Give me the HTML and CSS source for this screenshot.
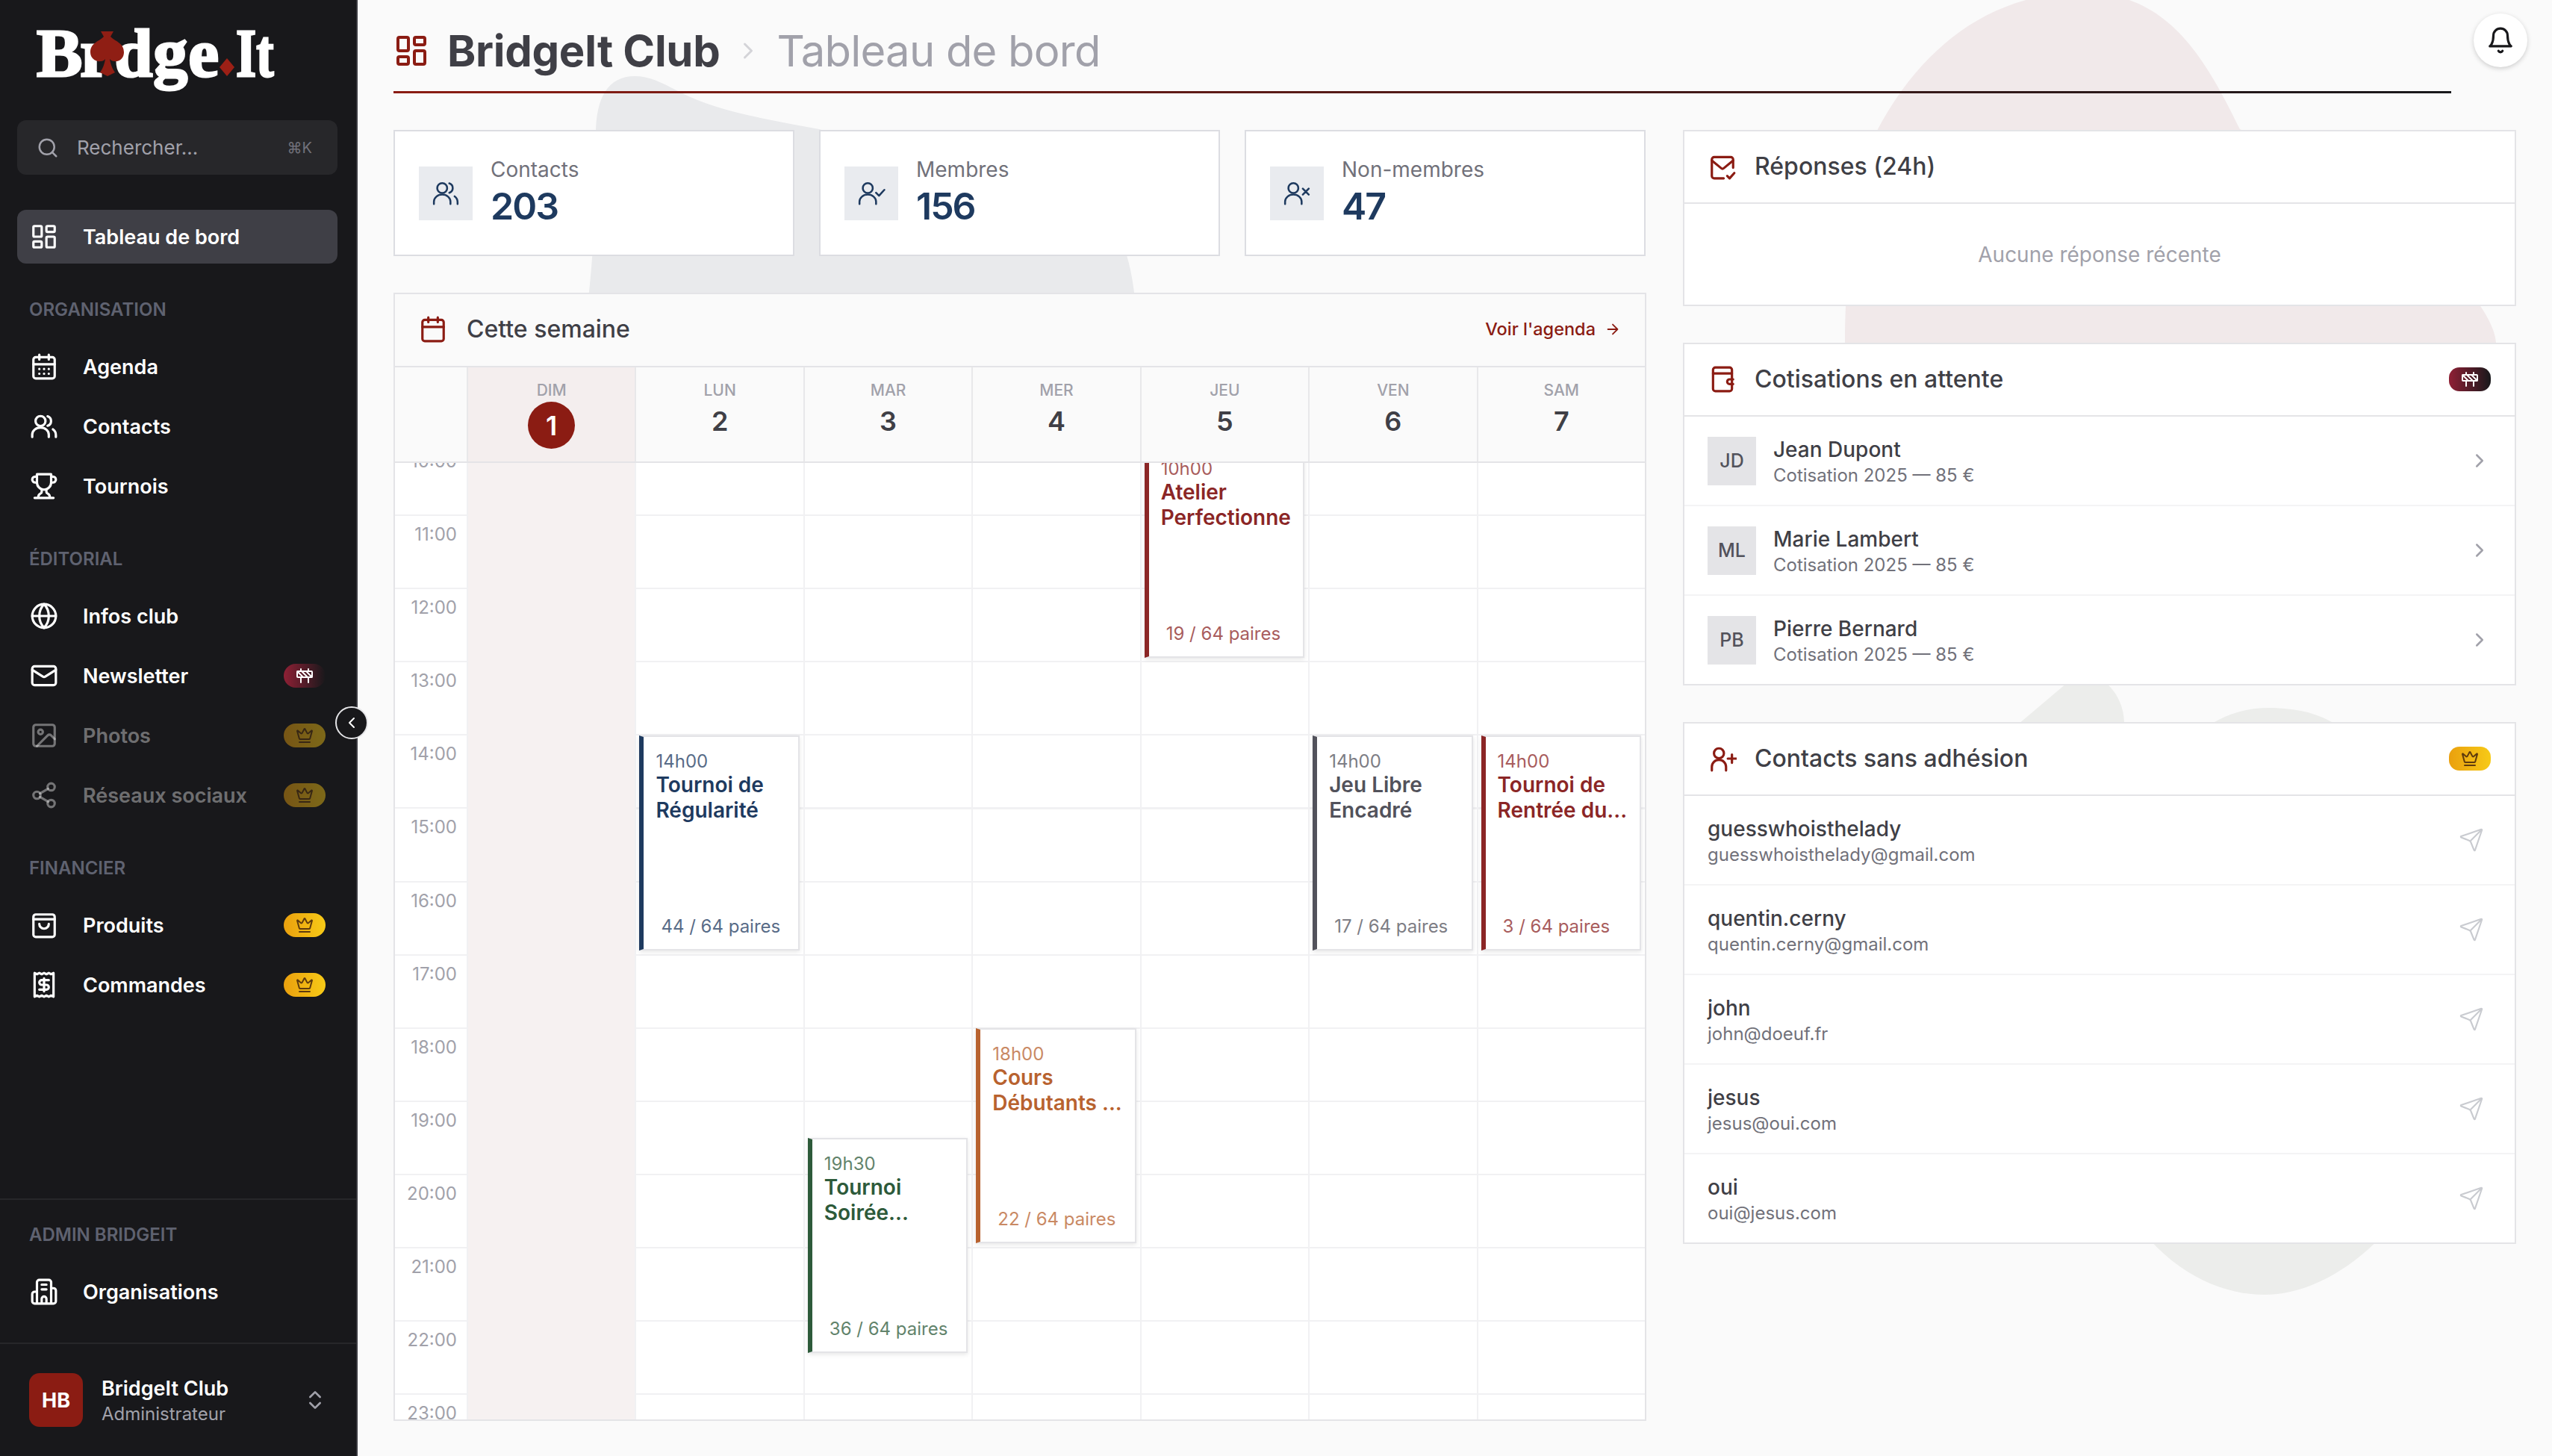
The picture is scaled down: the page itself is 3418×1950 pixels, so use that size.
FILE: index.html
```html
<!DOCTYPE html>
<html lang="fr">

<head>
  <meta charset="utf-8">
  <title>BridgeIt Club - Tableau de bord</title>
  <link rel="stylesheet" href="styles.css">
</head>

<body>
  <svg class="sprite" xmlns="http://www.w3.org/2000/svg">
    <symbol id="i-dashboard" viewBox="0 0 24 24"><rect x="3" y="3" width="7" height="9" rx="1"/><rect x="14" y="3" width="7" height="5" rx="1"/><rect x="14" y="12" width="7" height="9" rx="1"/><rect x="3" y="16" width="7" height="5" rx="1"/></symbol>
    <symbol id="i-search" viewBox="0 0 24 24"><circle cx="11" cy="11" r="8"/><path d="m21 21-4.3-4.3"/></symbol>
    <symbol id="i-agenda" viewBox="0 0 24 24"><path d="M8 2v4M16 2v4M3 10h18"/><rect x="3" y="4" width="18" height="18" rx="2"/><path d="M8 14h.01M12 14h.01M16 14h.01M8 18h.01M12 18h.01M16 18h.01"/></symbol>
    <symbol id="i-calendar" viewBox="0 0 24 24"><path d="M8 2v4M16 2v4M3 10h18"/><rect x="3" y="4" width="18" height="18" rx="2"/></symbol>
    <symbol id="i-users" viewBox="0 0 24 24"><circle cx="9" cy="7.5" r="4.2"/><path d="M2 21v-2a7 6 0 0 1 14 0v2M15 3.500a4.200 4.200 0 0 1 0 8M19.500 14.500a6 6 0 0 1 2.500 5V21"/></symbol>
    <symbol id="i-user-check" viewBox="0 0 24 24"><circle cx="9" cy="7.5" r="4.2"/><path d="M2 21v-2a7 6 0 0 1 14 0v2M16 11.500l2.500 2.500 4.500-5"/></symbol>
    <symbol id="i-user-x" viewBox="0 0 24 24"><circle cx="9" cy="7.5" r="4.2"/><path d="M2 21v-2a7 6 0 0 1 14 0v2M17 8l5 5M22 8l-5 5"/></symbol>
    <symbol id="i-user-plus" viewBox="0 0 24 24"><circle cx="9" cy="7.5" r="4.2"/><path d="M3 22v-3a6 6 0 0 1 12 0v3M20 8.500v7M16.500 12h7"/></symbol>
    <symbol id="i-trophy" viewBox="0 0 24 24"><path d="M6 9H4.500a2.500 2.500 0 0 1 0-5H6M18 9h1.500a2.500 2.500 0 0 0 0-5H18M4 22h16M10 14.660V17c0 .55-.47.98-.97 1.210C7.850 18.750 7 20.240 7 22M14 14.660V17c0 .55.47.98.97 1.210C16.150 18.750 17 20.240 17 22M18 2H6v7a6 6 0 0 0 12 0V2Z"/></symbol>
    <symbol id="i-globe" viewBox="0 0 24 24"><circle cx="12" cy="12" r="10"/><path d="M12 2a14.500 14.500 0 0 0 0 20 14.500 14.500 0 0 0 0-20M2 12h20"/></symbol>
    <symbol id="i-mail" viewBox="0 0 24 24"><rect x="2" y="4" width="20" height="16" rx="2"/><path d="m22 7-8.970 5.700a1.940 1.940 0 0 1-2.060 0L2 7"/></symbol>
    <symbol id="i-mail-check" viewBox="0 0 24 24"><path d="M21 13V6a2 2 0 0 0-2-2H5a2 2 0 0 0-2 2v14a2 2 0 0 0 2 2h8"/><path d="m21 7-8 6.500a1.600 1.600 0 0 1-2 0L3 7M16 20l2 2 4-4.500"/></symbol>
    <symbol id="i-image" viewBox="0 0 24 24"><rect x="3" y="3" width="18" height="18" rx="2"/><circle cx="9" cy="9" r="2"/><path d="m21 15-3.086-3.086a2 2 0 0 0-2.828 0L6 21"/></symbol>
    <symbol id="i-share" viewBox="0 0 24 24"><circle cx="18" cy="5" r="3"/><circle cx="6" cy="12" r="3"/><circle cx="18" cy="19" r="3"/><path d="m8.590 13.510 6.830 3.980M15.410 6.510l-6.820 3.980"/></symbol>
    <symbol id="i-bag" viewBox="0 0 24 24"><rect x="3" y="3" width="18" height="19" rx="2"/><path d="M3 7h18M16 11a4 4 0 0 1-8 0"/></symbol>
    <symbol id="i-receipt" viewBox="0 0 24 24"><path d="M4 2v20l2-1 2 1 2-1 2 1 2-1 2 1 2-1 2 1V2l-2 1-2-1-2 1-2-1-2 1-2-1-2 1Z"/><path d="M16 8h-6a2 2 0 1 0 0 4h4a2 2 0 1 1 0 4H8M12 17.500v-11"/></symbol>
    <symbol id="i-building" viewBox="0 0 24 24"><path d="M6 22V4a2 2 0 0 1 2-2h8a2 2 0 0 1 2 2v18ZM6 12H4a2 2 0 0 0-2 2v6a2 2 0 0 0 2 2h2M18 9h2a2 2 0 0 1 2 2v9a2 2 0 0 1-2 2h-2M10 6h4M10 10h4M10 22v-4a2 2 0 0 1 4 0v4"/></symbol>
    <symbol id="i-updown" viewBox="0 0 24 24"><path d="m7 15 5 5 5-5M7 9l5-5 5 5"/></symbol>
    <symbol id="i-barrier" viewBox="0 0 24 24"><rect x="2" y="6" width="20" height="8" rx="1"/><path d="M17 14v7M7 14v7M17 3v3M7 3v3M10 14 2.300 6.300M14 6l7.700 7.700M8 6l8 8"/></symbol>
    <symbol id="i-crown" viewBox="0 0 24 24"><path d="M11.562 3.266a.5.5 0 0 1 .876 0L15.390 8.870a1 1 0 0 0 1.516.294L21.183 5.500a.5.5 0 0 1 .798.519l-2.834 10.246a1 1 0 0 1-.956.734H5.810a1 1 0 0 1-.957-.734L2.020 6.020a.5.5 0 0 1 .798-.519l4.276 3.664a1 1 0 0 0 1.516-.294zM5 21h14"/></symbol>
    <symbol id="i-bell" viewBox="0 0 24 24"><path d="M6 8a6 6 0 0 1 12 0c0 7 3 9 3 9H3s3-2 3-9M10.300 21a1.940 1.940 0 0 0 3.400 0"/></symbol>
    <symbol id="i-wallet" viewBox="0 0 24 24"><rect x="4" y="2" width="16" height="20" rx="2"/><path d="M4 7h16M21 12h-3a2 2 0 0 0 0 4h3"/></symbol>
    <symbol id="i-send" viewBox="0 0 24 24"><path d="M14.536 21.686a.5.5 0 0 0 .937-.024l6.500-19a.496.496 0 0 0-.635-.635l-19 6.500a.5.5 0 0 0-.024.937l7.930 3.180a2 2 0 0 1 1.112 1.110zM21.854 2.147 10.914 13.086"/></symbol>
    <symbol id="i-arrow" viewBox="0 0 24 24"><path d="M5 12h14M12 5l7 7-7 7"/></symbol>
    <symbol id="i-next" viewBox="0 0 24 24"><path d="m9 18 6-6-6-6"/></symbol>
    <symbol id="i-prev" viewBox="0 0 24 24"><path d="m15 18-6-6 6-6"/></symbol>
  </svg>

  <div class="app">
    <aside class="sidebar">
      <div class="logo">
        <span class="logo-br">Br</span>
        <svg class="logo-spade" viewBox="0 0 45 60"><path d="M14 0h17l-4 7c5 6 18 8 18 21 0 8-6 13-13 12-3 0-5-2-6-3 1 7 4 14 7 18l-10 5-10-5c3-4 6-11 7-18-1 1-3 3-6 3C7 41 0 36 0 28 0 15 13 13 18 7Z"/></svg>
        <span class="logo-dge">dge</span>
        <svg class="logo-diamond" viewBox="0 0 20 24"><path d="M10 0l10 12-10 12L0 12Z"/></svg>
        <span class="logo-it">It</span>
      </div>

      <div class="search">
        <svg class="icon search-icon"><use href="#i-search"/></svg>
        <span class="search-text">Rechercher...</span>
        <span class="search-key">⌘K</span>
      </div>

      <nav class="nav">
        <a class="nav-item active"><svg class="icon"><use href="#i-dashboard"/></svg>Tableau de bord</a>

        <h4 class="nav-title">Organisation</h4>
        <a class="nav-item"><svg class="icon"><use href="#i-agenda"/></svg>Agenda</a>
        <a class="nav-item"><svg class="icon"><use href="#i-users"/></svg>Contacts</a>
        <a class="nav-item"><svg class="icon"><use href="#i-trophy"/></svg>Tournois</a>

        <h4 class="nav-title">Éditorial</h4>
        <a class="nav-item"><svg class="icon"><use href="#i-globe"/></svg>Infos club</a>
        <a class="nav-item"><svg class="icon"><use href="#i-mail"/></svg>Newsletter
          <span class="pill pill-wip"><svg class="icon"><use href="#i-barrier"/></svg></span></a>
        <a class="nav-item disabled"><svg class="icon"><use href="#i-image"/></svg>Photos
          <span class="pill pill-pro"><svg class="icon"><use href="#i-crown"/></svg></span></a>
        <a class="nav-item disabled"><svg class="icon"><use href="#i-share"/></svg>Réseaux sociaux
          <span class="pill pill-pro"><svg class="icon"><use href="#i-crown"/></svg></span></a>

        <h4 class="nav-title">Financier</h4>
        <a class="nav-item"><svg class="icon"><use href="#i-bag"/></svg>Produits
          <span class="pill pill-pro"><svg class="icon"><use href="#i-crown"/></svg></span></a>
        <a class="nav-item"><svg class="icon"><use href="#i-receipt"/></svg>Commandes
          <span class="pill pill-pro"><svg class="icon"><use href="#i-crown"/></svg></span></a>
      </nav>

      <div class="admin">
        <h4 class="nav-title">Admin BridgeIt</h4>
        <a class="nav-item"><svg class="icon"><use href="#i-building"/></svg>Organisations</a>
      </div>

      <div class="account">
        <div class="account-avatar">HB</div>
        <div class="account-text">
          <strong>BridgeIt Club</strong>
          <span>Administrateur</span>
        </div>
        <svg class="icon account-switch"><use href="#i-updown"/></svg>
      </div>

      <button class="collapse"><svg class="icon"><use href="#i-prev"/></svg></button>
    </aside>

    <main class="main">
      <svg class="shapes" viewBox="479 0 2939 1950">
        <path class="shape-gray" d="M850 102C815 102 798 130 798 180C798 260 796 330 788 400L1520 400C1510 300 1470 250 1380 228C1280 210 1180 195 1097 173C1030 160 960 150 908 122C885 110 870 102 850 102Z"/>
        <path class="shape-pink" d="M2790-10C2660-10 2570 70 2515 173C2490 250 2471 340 2471 460V600H3343V459C3340 400 3200 260 3000 173C2950 70 2900-10 2790-10Z"/>
        <path class="shape-pale" d="M2703 970 2768 915H2821C2838 930 2845 950 2845 970Z"/>
        <path class="shape-pale" d="M2961 970C2985 955 3010 948 3040 948C3075 948 3105 955 3128 970Z"/>
        <path class="shape-pale" d="M2870 1650C2920 1710 2980 1734 3033 1734C3090 1734 3150 1700 3195 1650Z"/>
      </svg>

      <header class="topbar">
        <svg class="icon topbar-icon"><use href="#i-dashboard"/></svg>
        <h1>BridgeIt Club</h1>
        <svg class="icon topbar-sep"><use href="#i-next"/></svg>
        <h2>Tableau de bord</h2>
      </header>
      <button class="bell"><svg class="icon"><use href="#i-bell"/></svg></button>

      <div class="columns">
        <div class="col-left">
          <section class="stats">
            <div class="stat">
              <div class="stat-icon"><svg class="icon"><use href="#i-users"/></svg></div>
              <div><div class="stat-label">Contacts</div><div class="stat-value">203</div></div>
            </div>
            <div class="stat">
              <div class="stat-icon"><svg class="icon"><use href="#i-user-check"/></svg></div>
              <div><div class="stat-label">Membres</div><div class="stat-value">156</div></div>
            </div>
            <div class="stat">
              <div class="stat-icon"><svg class="icon"><use href="#i-user-x"/></svg></div>
              <div><div class="stat-label">Non-membres</div><div class="stat-value">47</div></div>
            </div>
          </section>

          <section class="week">
            <div class="card-head week-top">
              <svg class="icon"><use href="#i-calendar"/></svg>
              <h3>Cette semaine</h3>
              <a class="week-link">Voir l'agenda <svg class="icon"><use href="#i-arrow"/></svg></a>
            </div>

            <div class="week-days">
              <div class="day-head"></div>
              <div class="day-head today"><span>DIM</span><b class="today-num">1</b></div>
              <div class="day-head"><span>LUN</span><b>2</b></div>
              <div class="day-head"><span>MAR</span><b>3</b></div>
              <div class="day-head"><span>MER</span><b>4</b></div>
              <div class="day-head"><span>JEU</span><b>5</b></div>
              <div class="day-head"><span>VEN</span><b>6</b></div>
              <div class="day-head"><span>SAM</span><b>7</b></div>
            </div>

            <div class="week-body">
              <div class="week-grid">
                <div class="hours">
                  <div>10:00</div><div>11:00</div><div>12:00</div><div>13:00</div><div>14:00</div>
                  <div>15:00</div><div>16:00</div><div>17:00</div><div>18:00</div><div>19:00</div>
                  <div>20:00</div><div>21:00</div><div>22:00</div><div>23:00</div>
                </div>
                <div class="day today-col"></div>
                <div class="day">
                  <div class="event ev-navy at-14">
                    <span class="ev-time">14h00</span>
                    <strong>Tournoi de Régularité</strong>
                    <span class="ev-count">44 / 64 paires</span>
                  </div>
                </div>
                <div class="day">
                  <div class="event ev-green at-1930">
                    <span class="ev-time">19h30</span>
                    <strong>Tournoi Soirée...</strong>
                    <span class="ev-count">36 / 64 paires</span>
                  </div>
                </div>
                <div class="day">
                  <div class="event ev-orange at-18">
                    <span class="ev-time">18h00</span>
                    <strong>Cours Débutants&nbsp;...</strong>
                    <span class="ev-count">22 / 64 paires</span>
                  </div>
                </div>
                <div class="day">
                  <div class="event ev-red at-10">
                    <span class="ev-time">10h00</span>
                    <strong>Atelier Perfectionne</strong>
                    <span class="ev-count">19 / 64 paires</span>
                  </div>
                </div>
                <div class="day">
                  <div class="event ev-gray at-14">
                    <span class="ev-time">14h00</span>
                    <strong>Jeu Libre Encadré</strong>
                    <span class="ev-count">17 / 64 paires</span>
                  </div>
                </div>
                <div class="day">
                  <div class="event ev-red at-14">
                    <span class="ev-time">14h00</span>
                    <strong>Tournoi de Rentrée du...</strong>
                    <span class="ev-count">3 / 64 paires</span>
                  </div>
                </div>
              </div>
            </div>
          </section>
        </div>

        <div class="col-right">
          <section class="panel">
            <div class="card-head">
              <svg class="icon"><use href="#i-mail-check"/></svg>
              <h3>Réponses (24h)</h3>
            </div>
            <p class="empty">Aucune réponse récente</p>
          </section>

          <section class="panel">
            <div class="card-head">
              <svg class="icon"><use href="#i-wallet"/></svg>
              <h3>Cotisations en attente</h3>
              <span class="tag pill-wip"><svg class="icon"><use href="#i-barrier"/></svg></span>
            </div>
            <div class="row">
              <div class="row-avatar">JD</div>
              <div class="row-text"><b>Jean Dupont</b><span>Cotisation 2025 — 85 €</span></div>
              <svg class="icon row-next"><use href="#i-next"/></svg>
            </div>
            <div class="row">
              <div class="row-avatar">ML</div>
              <div class="row-text"><b>Marie Lambert</b><span>Cotisation 2025 — 85 €</span></div>
              <svg class="icon row-next"><use href="#i-next"/></svg>
            </div>
            <div class="row">
              <div class="row-avatar">PB</div>
              <div class="row-text"><b>Pierre Bernard</b><span>Cotisation 2025 — 85 €</span></div>
              <svg class="icon row-next"><use href="#i-next"/></svg>
            </div>
          </section>

          <section class="panel">
            <div class="card-head">
              <svg class="icon"><use href="#i-user-plus"/></svg>
              <h3>Contacts sans adhésion</h3>
              <span class="tag pill-pro"><svg class="icon"><use href="#i-crown"/></svg></span>
            </div>
            <div class="row">
              <div class="row-text"><b>guesswhoisthelady</b><span>guesswhoisthelady@gmail.com</span></div>
              <svg class="icon row-send"><use href="#i-send"/></svg>
            </div>
            <div class="row">
              <div class="row-text"><b>quentin.cerny</b><span>quentin.cerny@gmail.com</span></div>
              <svg class="icon row-send"><use href="#i-send"/></svg>
            </div>
            <div class="row">
              <div class="row-text"><b>john</b><span>john@doeuf.fr</span></div>
              <svg class="icon row-send"><use href="#i-send"/></svg>
            </div>
            <div class="row">
              <div class="row-text"><b>jesus</b><span>jesus@oui.com</span></div>
              <svg class="icon row-send"><use href="#i-send"/></svg>
            </div>
            <div class="row">
              <div class="row-text"><b>oui</b><span>oui@jesus.com</span></div>
              <svg class="icon row-send"><use href="#i-send"/></svg>
            </div>
          </section>
        </div>
      </div>
    </main>
  </div>
</body>

</html>
```

FILE: styles.css
```css
* {
  box-sizing: border-box;
}

body {
  margin: 0;
  font-family: Inter, "Liberation Sans", sans-serif;
  background: #fafafa;
  color: #3f3f46;
}

h1,
h2,
h3,
h4,
p {
  margin: 0;
}

.sprite {
  display: none;
}

.icon {
  fill: none;
  stroke: currentColor;
  stroke-width: 2;
  stroke-linecap: round;
  stroke-linejoin: round;
  flex: none;
}

.app {
  display: flex;
  height: 1950px;
  overflow: hidden;
}

/* sidebar */

.sidebar {
  position: relative;
  z-index: 2;
  width: 479px;
  flex: none;
  display: flex;
  flex-direction: column;
  background: #18181b;
  border-right: 2px solid #3a3a40;
  color: #fff;
}

.logo {
  height: 161px;
  flex: none;
  padding: 25px 0 0 49px;
  display: flex;
  align-items: flex-start;
  font-family: "Liberation Serif", serif;
  font-weight: 700;
  font-size: 92px;
  -webkit-text-stroke: 3px #fff;
  line-height: 1;
}

.logo-br {
  letter-spacing: -3px;
}

.logo-spade {
  width: 45px;
  height: 60px;
  margin: 17px -13px 0 -24px;
  fill: #8f1e14;
  position: relative;
  flex: none;
}

.logo-dge {
  letter-spacing: 1px;
}

.logo-diamond {
  width: 20px;
  height: 24px;
  margin: 53px 2px 0 0;
  fill: #9c2016;
  flex: none;
}

.logo-it {
  transform: scaleX(0.76);
  transform-origin: left center;
}

.search {
  margin: 0 25px 0 23px;
  height: 73px;
  flex: none;
  border-radius: 12px;
  background: #27272a;
  display: flex;
  align-items: center;
  padding: 0 34px 0 26px;
  color: #a1a1aa;
  font-size: 26px;
}

.search-icon {
  width: 30px;
  height: 30px;
  margin-right: 24px;
}

.search-key {
  margin-left: auto;
  font-size: 20px;
  color: #71717a;
}

.nav {
  flex: 1;
  padding: 47px 25px 0 23px;
}

.nav-item {
  display: flex;
  align-items: center;
  height: 72px;
  margin-bottom: 8px;
  padding: 0 16px 0 17px;
  border-radius: 12px;
  font-size: 27px;
  font-weight: 600;
  color: #fff;
}

.nav-item .icon {
  width: 38px;
  height: 38px;
  margin-right: 33px;
}

.nav-item.active {
  background: #3f3f46;
}

.nav-item.disabled {
  color: rgba(255, 255, 255, 0.4);
}

.nav-item.disabled .pill {
  opacity: 0.45;
}

.nav-title {
  height: 24px;
  line-height: 24px;
  margin: 50px 0 28px 16px;
  font-size: 24px;
  font-weight: 600;
  text-transform: uppercase;
  color: #5f6270;
}

.pill {
  margin-left: auto;
  width: 56px;
  height: 32px;
  border-radius: 16px;
  display: flex;
  align-items: center;
  justify-content: center;
}

.pill .icon,
.tag .icon {
  width: 24px;
  height: 24px;
  margin: 0;
}

.pill-wip {
  background: linear-gradient(90deg, #8f2035, #18181b);
  color: #fff;
}

.pill-pro {
  background: linear-gradient(90deg, #eaa00e, #f7ca17);
  color: #5f3b0d;
}

.admin {
  height: 193px;
  flex: none;
  border-top: 2px solid #27272a;
  padding: 0 25px 0 23px;
}

.admin .nav-title {
  margin-top: 35px;
  margin-bottom: 28px;
}

.account {
  height: 152px;
  flex: none;
  border-top: 2px solid #27272a;
  padding: 0 39px;
  display: flex;
  align-items: center;
}

.account-avatar {
  width: 72px;
  height: 72px;
  border-radius: 14px;
  background: #8b1c13;
  display: flex;
  align-items: center;
  justify-content: center;
  font-size: 27px;
  font-weight: 700;
}

.account-text {
  margin-left: 25px;
  flex: 1;
  display: flex;
  flex-direction: column;
  padding-top: 3px;
}

.account-text strong {
  font-size: 27px;
  font-weight: 600;
  line-height: 34px;
}

.account-text span {
  font-size: 24px;
  line-height: 34px;
  color: #a1a1aa;
}

.account-switch {
  width: 32px;
  height: 32px;
  color: #a1a1aa;
}

.collapse {
  position: absolute;
  left: 449px;
  top: 946px;
  width: 44px;
  height: 44px;
  border-radius: 50%;
  border: 2px solid #e4e4e7;
  background: #18181b;
  color: #fff;
  padding: 0;
  display: flex;
  align-items: center;
  justify-content: center;
}

.collapse .icon {
  width: 24px;
  height: 24px;
}

/* main */

.main {
  position: relative;
  flex: 1;
  padding: 0 48px;
}

.shapes {
  position: absolute;
  left: 0;
  top: 0;
  width: 2939px;
  height: 1950px;
}

.shape-gray {
  fill: #e9eaec;
}

.shape-pink {
  fill: #f1e9ea;
}

.shape-pale {
  fill: #ecedeb;
}

.topbar {
  position: relative;
  width: 2756px;
  height: 125px;
  display: flex;
  align-items: center;
  padding-top: 14px;
  border-bottom: 3px solid;
  border-image: linear-gradient(90deg, #8b1c13, #18181b) 1;
}

.topbar-icon {
  width: 48px;
  height: 48px;
  color: #8b1c13;
  margin-right: 24px;
}

.topbar h1 {
  font-size: 58px;
  font-weight: 700;
  letter-spacing: -0.3px;
  color: #3f3f46;
}

.topbar-sep {
  width: 36px;
  height: 36px;
  margin: 0 20px;
  color: #d4d4d8;
}

.topbar h2 {
  font-size: 58px;
  font-weight: 400;
  letter-spacing: -0.8px;
  color: #a1a1aa;
}

.bell {
  position: absolute;
  top: 18px;
  right: 33px;
  width: 72px;
  height: 72px;
  border-radius: 50%;
  border: none;
  padding: 0;
  background: #fff;
  box-shadow: 0 2px 6px rgba(0, 0, 0, 0.18);
  color: #18181b;
  display: flex;
  align-items: center;
  justify-content: center;
}

.bell .icon {
  width: 38px;
  height: 38px;
}

.columns {
  position: relative;
  display: grid;
  grid-template-columns: 1678px 1116px;
  column-gap: 49px;
  margin-top: 49px;
}

.col-left,
.col-right {
  display: flex;
  flex-direction: column;
  gap: 49px;
}

.stats {
  display: grid;
  grid-template-columns: repeat(3, 537px);
  column-gap: 33px;
}

.stat {
  height: 169px;
  background: #fff;
  border: 2px solid #dcdde2;
  padding-left: 32px;
  display: flex;
  align-items: center;
  gap: 24px;
}

.stat-icon {
  width: 72px;
  height: 72px;
  background: #e9ebef;
  color: #1e3a5f;
  display: flex;
  align-items: center;
  justify-content: center;
}

.stat-icon .icon {
  width: 38px;
  height: 38px;
  stroke-width: 1.6;
}

.stat-label {
  font-size: 28px;
  line-height: 34px;
  color: #71717a;
}

.stat-value {
  font-size: 50px;
  line-height: 64px;
  font-weight: 600;
  letter-spacing: -2px;
  color: #1e3a5f;
}

/* week calendar */

.week {
  height: 1511px;
  display: flex;
  flex-direction: column;
  background: #fff;
  border: 2px solid #e4e4e7;
}

.card-head {
  height: 97px;
  flex: none;
  display: flex;
  align-items: center;
  padding: 0 32px 2px;
  border-bottom: 2px solid #e4e4e7;
}

.card-head > .icon {
  width: 38px;
  height: 38px;
  color: #8b1c13;
  margin-right: 24px;
}

.card-head h3 {
  font-size: 32px;
  font-weight: 500;
  color: #3f3f46;
}

.week-top {
  height: 98px;
  padding-bottom: 3px;
  background: #fafafa;
}

.week-top > .icon {
  margin-right: 26px;
}

.week-link {
  margin-left: auto;
  display: flex;
  align-items: center;
  gap: 12px;
  font-size: 23.5px;
  font-weight: 500;
  color: #8b1c13;
}

.week-link .icon {
  width: 22px;
  height: 22px;
}

.week-days {
  height: 128px;
  flex: none;
  display: grid;
  grid-template-columns: 96px repeat(7, 1fr);
  border-bottom: 2px solid #e4e4e7;
  background: #fafafa;
}

.day-head {
  border-left: 2px solid #e8e8ea;
  display: flex;
  flex-direction: column;
  align-items: center;
  padding-top: 18px;
}

.day-head:first-child {
  border-left: none;
}

.day-head span {
  font-size: 21px;
  line-height: 26px;
  font-weight: 500;
  color: #a1a1aa;
}

.day-head b {
  font-size: 36px;
  line-height: 48px;
  margin-top: 4px;
  font-weight: 600;
}

.day-head.today {
  background: #f4eeee;
}

.day-head b.today-num {
  width: 63px;
  height: 63px;
  margin-top: 2px;
  border-radius: 50%;
  background: #8b1c13;
  color: #fff;
  display: flex;
  align-items: center;
  justify-content: center;
}

.week-body {
  flex: 1;
  overflow: hidden;
  min-height: 0;
}

/* grid is scrolled down to 10:00 */
.week-grid {
  display: grid;
  grid-template-columns: 96px repeat(7, 1fr);
  margin-top: -29px;
  height: 1373.4px;
}

.hours div {
  height: 98.1px;
  border-top: 2px solid #f1f1f3;
  padding: 11px 13px 0 0;
  text-align: right;
  font-size: 24px;
  line-height: 28px;
  color: #a1a1aa;
}

.day {
  position: relative;
  border-left: 2px solid #f1f1f3;
  background: repeating-linear-gradient(to bottom, #f1f1f3 0, #f1f1f3 2px, transparent 2px, transparent 98.1px);
}

.day.today-col {
  background: #f6f1f1;
}

.event {
  position: absolute;
  left: 4px;
  right: 5px;
  height: 288px;
  display: flex;
  flex-direction: column;
  padding: 19px 14px 16px 16px;
  background: #fff;
  border: 2px solid #e4e4e7;
  border-left: 6px solid;
  box-shadow: 0 2px 6px rgba(0, 0, 0, 0.1);
}

.event strong {
  font-size: 28px;
  line-height: 34px;
  font-weight: 600;
}

.ev-time {
  font-size: 24px;
  line-height: 28px;
  opacity: 0.75;
}

.ev-count {
  margin: auto 0 0 7px;
  font-size: 24px;
  line-height: 28px;
  opacity: 0.75;
}

.at-10 {
  top: 2px;
}

.at-14 {
  top: 394px;
}

.at-18 {
  top: 786px;
}

.at-1930 {
  top: 933px;
}

.ev-navy {
  color: #1e3a5f;
}

.ev-green {
  color: #2d5a3a;
}

.ev-orange {
  color: #b8622f;
}

.ev-red {
  color: #8b2626;
}

.ev-gray {
  color: #52525b;
}

/* right column */

.panel {
  background: #fff;
  border: 2px solid #e4e4e7;
}

.tag {
  margin-left: auto;
  width: 56px;
  height: 32px;
  border-radius: 14px;
  display: flex;
  align-items: center;
  justify-content: center;
}

.empty {
  height: 135px;
  display: flex;
  align-items: center;
  justify-content: center;
  font-size: 28px;
  color: #a1a1aa;
}

.row {
  height: 120px;
  display: flex;
  align-items: center;
  padding: 0 32px 0 31px;
  border-bottom: 2px solid #f4f4f5;
}

.row:last-child {
  height: 118px;
  border-bottom: none;
}

.row-avatar {
  width: 65px;
  height: 65px;
  margin-right: 23px;
  background: #e4e4e7;
  display: flex;
  align-items: center;
  justify-content: center;
  font-size: 25px;
  font-weight: 500;
  color: #52525b;
}

.row-text {
  flex: 1;
  display: flex;
  flex-direction: column;
  padding-top: 4px;
}

.row-text b {
  font-size: 28px;
  line-height: 36px;
  font-weight: 500;
}

.row-text span {
  font-size: 24px;
  line-height: 34px;
  color: #71717a;
}

.row-next {
  width: 30px;
  height: 30px;
  color: #a1a1aa;
}

.row-send {
  width: 34px;
  height: 34px;
  margin-right: 9px;
  stroke-width: 1.5;
  color: #c9cbd0;
}
```
